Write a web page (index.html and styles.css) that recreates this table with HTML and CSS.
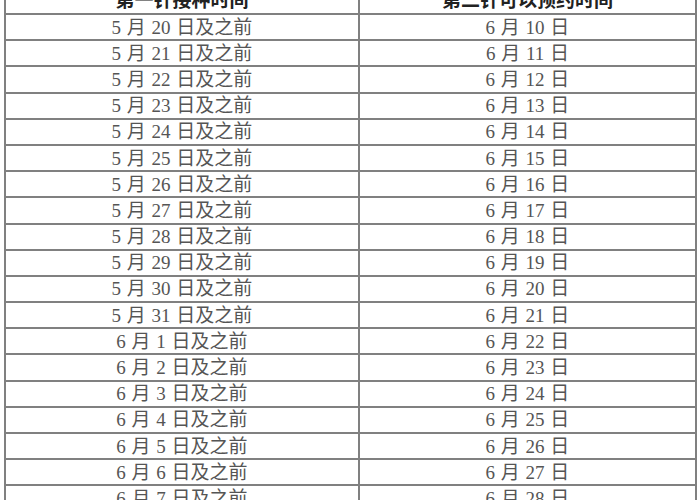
FILE: index.html
```html
<!DOCTYPE html>
<html lang="zh-CN">
<head>
<meta charset="utf-8">
<title>接种时间</title>
<link rel="stylesheet" href="styles.css">
</head>
<body>
<div class="sheet">
  <div class="row head"><div class="cell">第一针接种时间</div><div class="cell">第二针可以预约时间</div></div>
  <div class="row"><div class="cell">5 月 20 日及之前</div><div class="cell">6 月 10 日</div></div>
  <div class="row"><div class="cell">5 月 21 日及之前</div><div class="cell">6 月 11 日</div></div>
  <div class="row"><div class="cell">5 月 22 日及之前</div><div class="cell">6 月 12 日</div></div>
  <div class="row"><div class="cell">5 月 23 日及之前</div><div class="cell">6 月 13 日</div></div>
  <div class="row"><div class="cell">5 月 24 日及之前</div><div class="cell">6 月 14 日</div></div>
  <div class="row"><div class="cell">5 月 25 日及之前</div><div class="cell">6 月 15 日</div></div>
  <div class="row"><div class="cell">5 月 26 日及之前</div><div class="cell">6 月 16 日</div></div>
  <div class="row"><div class="cell">5 月 27 日及之前</div><div class="cell">6 月 17 日</div></div>
  <div class="row"><div class="cell">5 月 28 日及之前</div><div class="cell">6 月 18 日</div></div>
  <div class="row"><div class="cell">5 月 29 日及之前</div><div class="cell">6 月 19 日</div></div>
  <div class="row"><div class="cell">5 月 30 日及之前</div><div class="cell">6 月 20 日</div></div>
  <div class="row"><div class="cell">5 月 31 日及之前</div><div class="cell">6 月 21 日</div></div>
  <div class="row"><div class="cell">6 月 1 日及之前</div><div class="cell">6 月 22 日</div></div>
  <div class="row"><div class="cell">6 月 2 日及之前</div><div class="cell">6 月 23 日</div></div>
  <div class="row"><div class="cell">6 月 3 日及之前</div><div class="cell">6 月 24 日</div></div>
  <div class="row"><div class="cell">6 月 4 日及之前</div><div class="cell">6 月 25 日</div></div>
  <div class="row"><div class="cell">6 月 5 日及之前</div><div class="cell">6 月 26 日</div></div>
  <div class="row"><div class="cell">6 月 6 日及之前</div><div class="cell">6 月 27 日</div></div>
  <div class="row"><div class="cell">6 月 7 日及之前</div><div class="cell">6 月 28 日</div></div>
</div>
</body>
</html>
```
FILE: styles.css
```css
html, body {
  margin: 0;
  padding: 0;
  background: #ffffff;
  overflow: hidden;
}
body {
  font-family: "Liberation Serif", "Noto Sans CJK SC", serif;
  color: #555555;
}
.sheet {
  margin: -11.2px 0 0 4px;
  width: 693px;
  box-sizing: border-box;
  border-left: 2px solid #808080;
  border-right: 2px solid #808080;
}
.row {
  display: grid;
  grid-template-columns: 354px 1fr;
  height: 26.2px;
  box-sizing: border-box;
  border-bottom: 2px solid #808080;
}
.cell {
  display: flex;
  align-items: center;
  justify-content: center;
  font-size: 19px;
  line-height: 1;
  white-space: pre;
  word-spacing: 1px;
}
.cell:first-child {
  border-right: 2px solid #808080;
}
.head .cell {
  font-weight: bold;
  color: #222222;
}
```
